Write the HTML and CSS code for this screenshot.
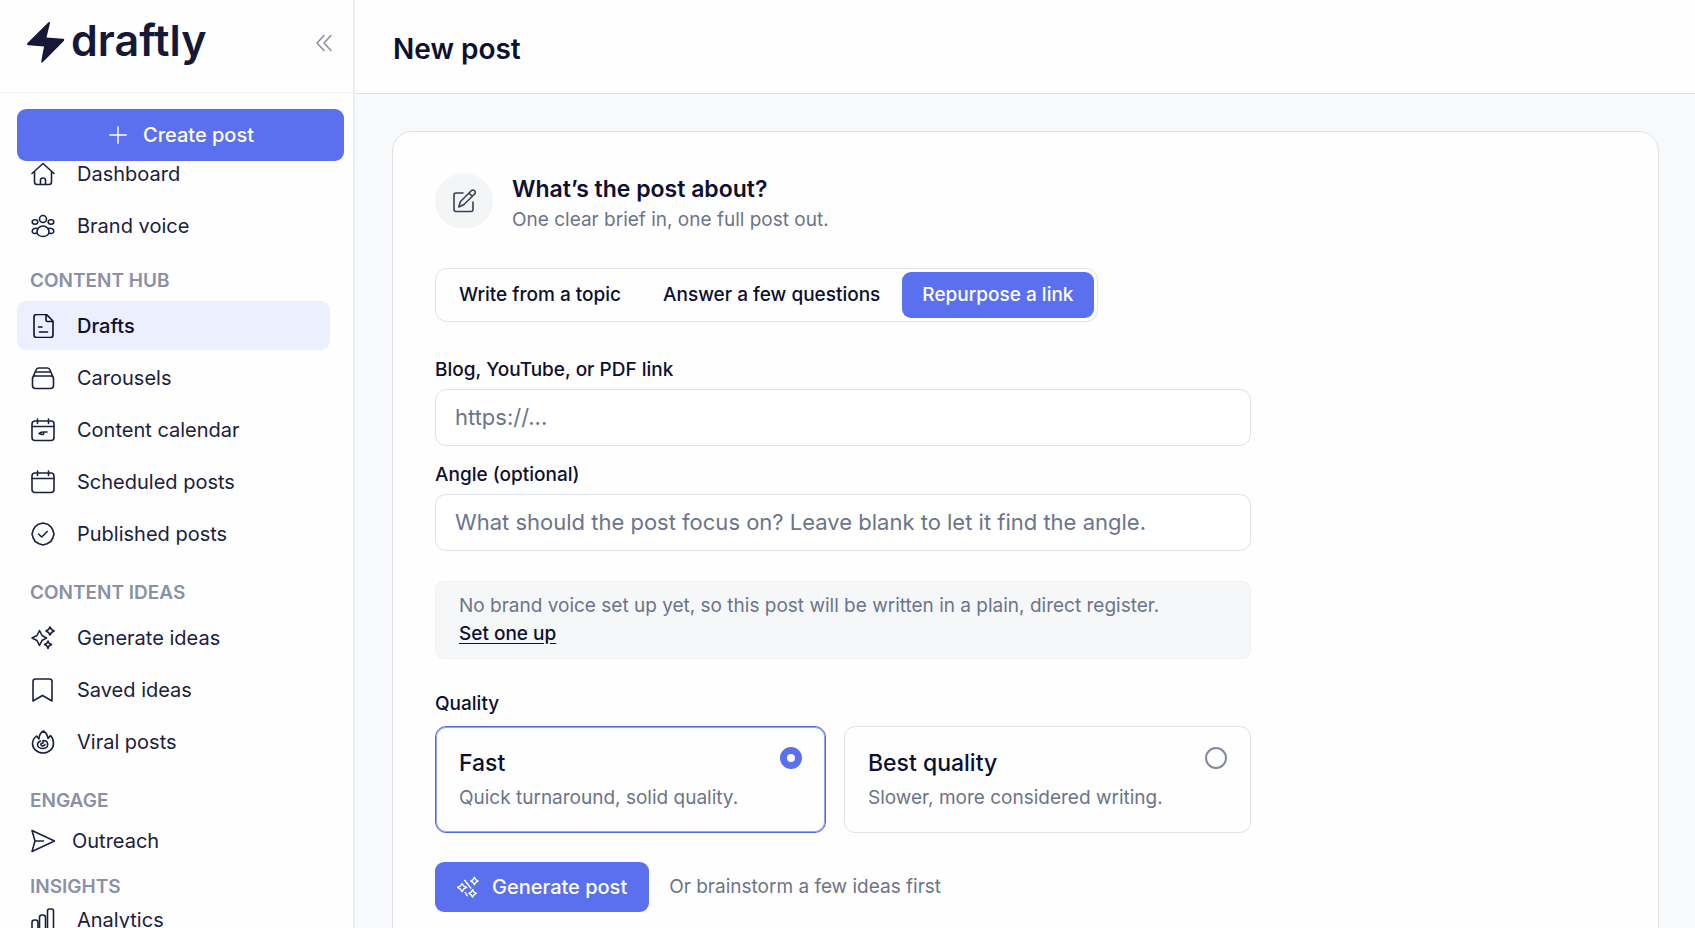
FILE: index.html
```
<!DOCTYPE html>
<html lang="en">
<head>
  <meta charset="UTF-8">
  <meta name="viewport" content="width=device-width, initial-scale=1.0">
  <title>New post - draftly</title>
  <link rel="stylesheet" href="styles.css">
</head>
<body>

<aside class="sidebar">
  <div class="sidebar-head">
    <a class="logo" href="#">
      <svg class="logo-mark" viewBox="0 0 39 42" aria-hidden="true">
        <path d="M22.5 1.3 1.5 22q-1.2 2 .8 2.200L18 25.500 15.200 40.500q.3 1.800 1.800.5L37.800 20q1.200-2-.8-2.200L20.500 16.500 24 2q-.1-1.500-1.500-.7z"/>
      </svg>
      <span>draftly</span>
    </a>
    <button class="collapse-btn" aria-label="Collapse sidebar">
      <svg class="icon" viewBox="0 0 24 24"><path d="M13 5.500 6 13l7 7.500M20 5.500l-7 7.500 7 7.500"/></svg>
    </button>
  </div>

  <button class="btn create-btn">
    <svg class="icon" viewBox="0 0 24 24"><path d="M12 3v18M3 12h18"/></svg>
    Create post
  </button>

  <nav>
    <ul>
      <li><a href="#">
        <svg class="icon" viewBox="0 0 24 24"><path d="M1 11.500 12 1.500l11 10M3.500 9.500V20q0 2.500 2.500 2.500h12q2.500 0 2.500-2.500V9.500M9.500 22v-4q0-2 2.500-2t2.500 2v4"/></svg>
        Dashboard
      </a></li>
      <li><a href="#">
        <svg class="icon" viewBox="0 0 24 24"><circle cx="12" cy="5" r="3.500"/><ellipse cx="4" cy="8" rx="2.800" ry="2.200"/><ellipse cx="20" cy="8" rx="2.800" ry="2.200"/><path d="M12 12c-4 0-6 3.500-6 6s2.500 4.500 6 4.500 6-2 6-4.500-2-6-6-6zM6.500 14.500c-3-.8-5.300.6-5.300 3 0 1.800 2.300 2.500 4.800 1.500M17.500 14.500c3-.8 5.300.6 5.300 3 0 1.800-2.300 2.500-4.800 1.500"/></svg>
        Brand voice
      </a></li>
    </ul>

    <h3 class="first">Content hub</h3>
    <ul>
      <li><a class="active" href="#">
        <svg class="icon" viewBox="0 0 24 24"><path d="M15.500.500H5.500Q3 .500 3 3v18q0 2.500 2.500 2.500h14q2.500 0 2.500-2.500V7zM15 1v5q0 1.500 1.500 1.500H21.500M7.500 13h3.500M8.500 18h8"/></svg>
        Drafts
      </a></li>
      <li><a href="#">
        <svg class="icon" viewBox="0 0 24 24"><path d="M4 10h16q2.500 0 2.500 2.500v7q0 3-3 3h-15q-3 0-3-3v-7Q1.500 10 4 10zM2 11 5 4q.8-2 2.500-2h9q1.700 0 2.500 2l3 7M4.500 6h15"/></svg>
        Carousels
      </a></li>
      <li><a href="#">
        <svg class="icon" viewBox="0 0 24 24"><rect x="1" y="3" width="22" height="19.500" rx="3"/><path d="M1 8.500h22M6.500 1v4.500M17.500 1v4.500M11 14l-3 1.500 3 1M12.500 16.500v-2.500h3.500"/></svg>
        Content calendar
      </a></li>
      <li><a href="#">
        <svg class="icon" viewBox="0 0 24 24"><rect x="1" y="3" width="22" height="19.500" rx="3"/><path d="M1 8.500h22M6.500 1v4.500M17.500 1v4.500"/></svg>
        Scheduled posts
      </a></li>
      <li><a href="#">
        <svg class="icon" viewBox="0 0 24 24"><path d="M12 1 16.500 2.200 20 4.800 21.800 8 23 12 21.800 16 19.800 19.500 16 21.800 12 23 8 21.800 4.200 19.500 2.200 16 1 12 2.200 8 4 4.800 7.500 2.200z"/><path d="m7.500 12 3.200 3 5.500-5.500"/></svg>
        Published posts
      </a></li>
    </ul>

    <h3>Content ideas</h3>
    <ul>
      <li><a href="#">
        <svg class="icon" viewBox="0 0 24 24"><path d="M8.500 4.500 11 9.500l4.500 2.500-4.500 2.500-2.500 5-2.500-5L1 12l5-2.500zM19 1l1.500 2.500L23 5l-2.500 1.500L19 9l-1.500-2.500L15 5l2.500-1.500zM17 15l1.200 2.300 2.300 1.200-2.300 1.200L17 22.500l-1.200-2.800-2.300-1.200 2.300-1.200z"/></svg>
        Generate ideas
      </a></li>
      <li><a href="#">
        <svg class="icon" viewBox="0 0 24 24"><path d="M2 23V3.500Q2 1 4.500 1h14Q21 1 21 3.500V23l-9.500-5.500z"/></svg>
        Saved ideas
      </a></li>
      <li><a href="#">
        <svg class="icon" viewBox="0 0 24 24"><path d="M12.500 1C9 3 8 6 8 9L5.500 6C3 8 1.500 10.500 1.500 13.500c0 5 4.500 9.500 10.500 9.500s10.500-4.500 10.500-9.500c0-3-1-6-3-8L17 8.500C16.500 5 15 2.500 12.500 1z"/><path d="M9.500 11c-2 .8-3 2-3 3.500 0 2.500 2.500 4 5.200 4s5-1.500 5-4-2-4-4.700-4V13c-1.500 0-2.500.8-2 2s3.200 1.200 4-.5"/></svg>
        Viral posts
      </a></li>
    </ul>

    <h3>Engage</h3>
    <ul class="compact">
      <li><a href="#">
        <svg class="icon" viewBox="0 0 24 24"><path d="M1 1.500 23.500 12 1 22.500 4 12zM4.500 12h8"/></svg>
        Outreach
      </a></li>
    </ul>

    <h3 class="tight">Insights</h3>
    <ul>
      <li><a href="#">
        <svg class="icon" viewBox="0 0 24 24"><rect x="1" y="12" width="6" height="14" rx="2.500"/><rect x="8.500" y="7" width="6" height="19" rx="2.500"/><rect x="16.500" y="1" width="6" height="25" rx="2"/></svg>
        Analytics
      </a></li>
    </ul>
  </nav>
</aside>

<main>
  <header>
    <h1>New post</h1>
  </header>

  <div class="content">
    <form class="card" onsubmit="return false">
      <div class="card-head">
        <div class="card-icon">
          <svg class="icon" viewBox="0 0 24 24"><path d="M11 4H4Q2 4 2 6v14.500q0 2 2 2h15q2 0 2-2V13"/><path d="M19.300 1.700a2.300 2.300 0 0 1 3.300 0 2.300 2.300 0 0 1 0 3.300L12 15.500 6.800 18 8.500 12.500zM17 4l3.300 3.300"/></svg>
        </div>
        <div>
          <h2>What’s the post about?</h2>
          <p>One clear brief in, one full post out.</p>
        </div>
      </div>

      <div class="tabs">
        <button type="button">Write from a topic</button>
        <button type="button">Answer a few questions</button>
        <button type="button" class="active">Repurpose a link</button>
      </div>

      <div class="fields">
        <label for="linkInput">Blog, YouTube, or PDF link</label>
        <input type="text" id="linkInput" placeholder="https://...">

        <label for="angleInput">Angle (optional)</label>
        <input type="text" id="angleInput" placeholder="What should the post focus on? Leave blank to let it find the angle.">

        <div class="notice">
          <p>No brand voice set up yet, so this post will be written in a plain, direct register.</p>
          <a href="#">Set one up</a>
        </div>

        <fieldset>
          <legend>Quality</legend>
          <div class="options">
            <label class="option">
              <span>
                <strong>Fast</strong>
                <small>Quick turnaround, solid quality.</small>
              </span>
              <input type="radio" name="quality" value="fast" checked>
            </label>
            <label class="option">
              <span>
                <strong>Best quality</strong>
                <small>Slower, more considered writing.</small>
              </span>
              <input type="radio" name="quality" value="best">
            </label>
          </div>
        </fieldset>
      </div>

      <div class="actions">
        <button class="btn generate-btn">
          <svg class="icon" viewBox="0 0 24 24"><path d="M5.500 8.500 7.500 11l3 1.500-3 1.500-2 3-2-3L.500 12.500 3.500 11zM19 1.500 20.500 4 23 5.500 20.500 7 19 9.500 17.500 7 15 5.500 17.500 4zM17 15l1.500 2.500L21 19l-2.500 1.500L17 23l-1.500-2.500L13 19l2.500-1.500zM8.500 5l6.500 8M9 18l2 3.500"/></svg>
          Generate post
        </button>
        <a href="#">Or brainstorm a few ideas first</a>
      </div>
    </form>
  </div>
</main>

</body>
</html>
```
FILE: styles.css
```
:root {
  --accent: #5a70ee;
  --ink: #0d1030;
  --nav-text: #1b2040;
  --muted: #6c7489;
  --label: #8b90a5;
  --border: #dfe2e6;
  --page-bg: #f8f9fa;
}

* {
  box-sizing: border-box;
}

body {
  margin: 0;
  display: flex;
  height: 100vh;
  overflow: hidden;
  font-family: Inter, "Liberation Sans", sans-serif;
  font-size: 19px;
  line-height: 28px;
  color: var(--ink);
  background: #fefefe;
}

h1, h2, h3, p, ul, fieldset {
  margin: 0;
  padding: 0;
}

button, input {
  font: inherit;
  color: inherit;
}

button {
  cursor: pointer;
  border: none;
  background: none;
}

a {
  color: inherit;
  text-decoration: none;
}

.icon {
  width: 24px;
  height: 24px;
  flex: none;
  fill: none;
  stroke: currentColor;
  stroke-width: 1.6;
  stroke-linecap: round;
  stroke-linejoin: round;
}

.btn {
  display: flex;
  align-items: center;
  justify-content: center;
  background: var(--accent);
  color: #fff;
  font-size: 20px;
  font-weight: 500;
  border-radius: 9px;
}

/* sidebar */
.sidebar {
  width: 355px;
  flex: none;
  border-right: 2px solid #eceef2;
  overflow: hidden;
}

.sidebar-head {
  display: flex;
  align-items: center;
  justify-content: space-between;
  height: 93px;
  padding: 0 18px 8px 26px;
  border-bottom: 1px solid #f0f2f4;
}

.logo {
  display: flex;
  align-items: center;
  gap: 6px;
  font-size: 43px;
  line-height: 48px;
  font-weight: 600;
  color: #151937;
}

.logo span {
  padding-bottom: 4px;
}

.logo-mark {
  width: 39px;
  height: 42px;
  fill: #151937;
}

.collapse-btn {
  display: flex;
  padding: 0;
  color: #8a8fa3;
}

.create-btn {
  position: relative;
  z-index: 1;
  width: 327px;
  height: 52px;
  margin: 16px 0 0 17px;
  gap: 14px;
}

.create-btn .icon {
  width: 22px;
  height: 22px;
}

nav {
  padding: 0 23px 0 17px;
  margin-top: -12px;
}

nav ul {
  list-style: none;
  display: grid;
  gap: 3px;
}

nav a {
  display: flex;
  align-items: center;
  gap: 22px;
  height: 49px;
  padding-left: 14px;
  border-radius: 9px;
  font-size: 20px;
  color: var(--nav-text);
}

nav a.active {
  background: #eceffd;
  color: var(--ink);
  font-weight: 500;
}

nav h3 {
  padding: 23px 0 8px 13px;
  font-size: 19px;
  line-height: 24px;
  font-weight: 600;
  text-transform: uppercase;
  color: var(--label);
}

nav h3.first {
  padding-top: 19px;
}

nav h3.tight {
  padding: 14px 0 0 13px;
  margin-bottom: -4px;
}

nav .compact a {
  height: 40px;
  gap: 17px;
}

/* main area */
main {
  flex: 1;
  display: flex;
  flex-direction: column;
  min-width: 0;
}

header {
  height: 94px;
  flex: none;
  display: flex;
  align-items: center;
  padding: 4px 38px 0;
  border-bottom: 1px solid var(--border);
}

h1 {
  font-size: 28px;
  line-height: 36px;
  font-weight: 600;
}

.content {
  flex: 1;
  min-height: 0;
  padding: 37px 36px 37px 37px;
  overflow: hidden;
  background: var(--page-bg);
}

.card {
  padding: 41px 42px 56px;
  background: #fefefe;
  border: 1px solid var(--border);
  border-radius: 20px;
}

.card-head {
  display: flex;
  align-items: flex-start;
  gap: 19px;
}

.card-icon {
  display: flex;
  align-items: center;
  justify-content: center;
  width: 58px;
  height: 56px;
  border-radius: 50%;
  background: #f3f5f7;
  color: #3a3f58;
}

h2 {
  font-size: 23px;
  line-height: 33px;
  font-weight: 600;
}

.card-head p {
  color: var(--muted);
}

.tabs {
  display: flex;
  gap: 2px;
  width: fit-content;
  margin-top: 34px;
  padding: 3px;
  border: 1px solid var(--border);
  border-radius: 12px;
}

.tabs button {
  height: 46px;
  padding: 0 20px;
  border-radius: 9px;
  font-weight: 500;
}

.tabs button.active {
  background: var(--accent);
  color: #fff;
}

.fields {
  max-width: 816px;
  margin-top: 34px;
}

.fields label[for], legend {
  display: block;
  padding: 0;
  font-weight: 500;
}

input[type="text"] {
  display: block;
  width: 100%;
  height: 57px;
  margin: 5px 0 15px;
  padding: 0 19px 2px;
  font-size: 22px;
  border: 1px solid var(--border);
  border-radius: 11px;
  background: #fff;
}

input::placeholder {
  color: var(--muted);
  opacity: 1;
}

.notice {
  margin-top: 30px;
  padding: 10px 23px;
  border: 1px solid #eef0f2;
  border-radius: 9px;
  background: #f6f7f9;
  color: var(--muted);
}

.notice a {
  color: var(--ink);
  font-weight: 500;
  text-decoration: underline;
  text-underline-offset: 3px;
}

fieldset {
  margin-top: 31px;
  border: none;
}

.options {
  display: grid;
  grid-template-columns: 391fr 407fr;
  gap: 18px;
  margin-top: 8px;
}

.option {
  display: flex;
  align-items: flex-start;
  justify-content: space-between;
  padding: 20px 23px;
  border: 1px solid var(--border);
  border-radius: 11px;
  cursor: pointer;
}

.option:has(input:checked) {
  border-color: #4f66dc;
  box-shadow: inset 0 0 0 1px #93a2f2;
}

.option strong, .option small {
  display: block;
}

.option strong {
  font-size: 23px;
  line-height: 32px;
  font-weight: 500;
}

.option small {
  margin-top: 5px;
  font-size: 19px;
  line-height: 28px;
  color: var(--muted);
}

input[type="radio"] {
  appearance: none;
  width: 22px;
  height: 22px;
  margin: 0;
  border: 2px solid #8288a0;
  border-radius: 50%;
}

input[type="radio"]:checked {
  border: 7px solid var(--accent);
}

.actions {
  display: flex;
  align-items: center;
  gap: 20px;
  margin-top: 29px;
  color: var(--muted);
}

.generate-btn {
  height: 50px;
  padding: 0 22px;
  gap: 13px;
}

.generate-btn .icon {
  width: 22px;
  height: 22px;
}
```
